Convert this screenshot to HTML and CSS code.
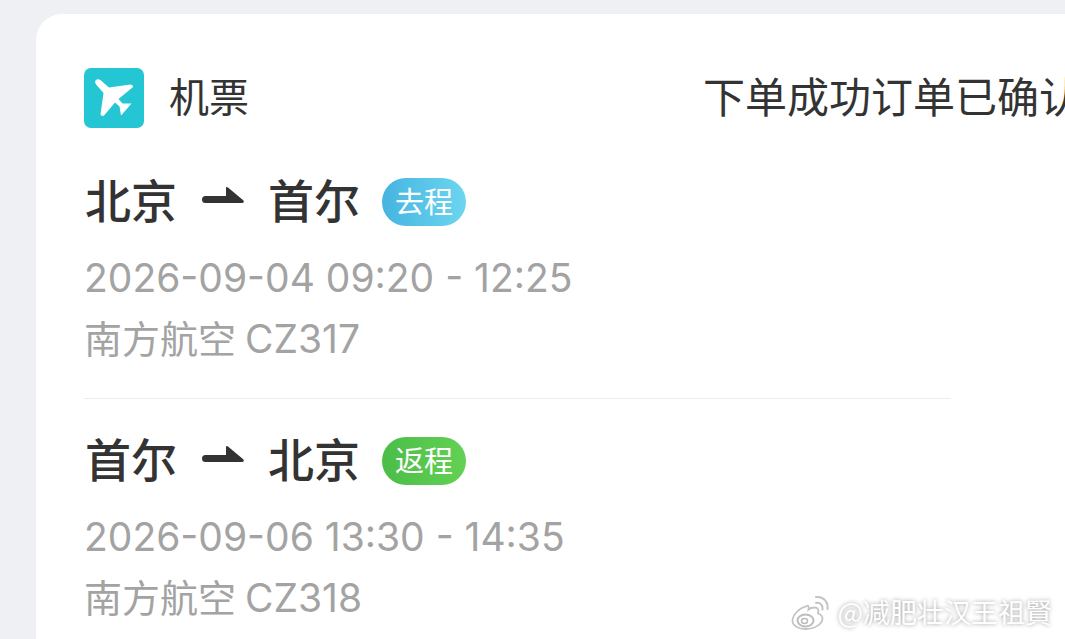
FILE: index.html
```html
<!DOCTYPE html>
<html lang="zh-CN">
<head>
<meta charset="utf-8">
<title>机票</title>
<link rel="stylesheet" href="styles.css">
</head>
<body>
<main class="card">
  <header class="head">
    <div class="brand">
      <svg class="logo" viewBox="0 0 60 60" aria-hidden="true">
        <rect width="60" height="60" rx="7" fill="#25c6d3"/>
        <path d="M12.500 17Q10 14 12 12 14 10.500 17 12.500L25 19.500 46.500 16.500Q50 17 48.500 19.500L34.500 31 38.500 35.500H47.500L37 47.500 35.500 38.500 31 34.500 20.500 47Q18 49 16.500 46.500L19.500 25Z" fill="#fff"/>
      </svg>
      <span class="brand-name">机票</span>
    </div>
    <span class="status">下单成功订单已确认</span>
  </header>

  <section class="leg">
    <h2 class="route">
      <span class="place">北京</span>
      <svg class="arrow" viewBox="0 0 42 20" aria-hidden="true"><path d="M3.500 11H24V3Q24 1.500 26 2.500L41.500 15.500Q42.500 18 40 18H3.500A3.500 3.500 0 0 1 3.500 11Z" fill="#333"/></svg>
      <span class="place">首尔</span>
      <span class="tag tag-out">去程</span>
    </h2>
    <p class="meta">2026-09-04 09:20 - 12:25</p>
    <p class="meta"><span class="carrier">南方航空</span><span class="flight">CZ317</span></p>
  </section>

  <hr class="rule">

  <section class="leg">
    <h2 class="route">
      <span class="place">首尔</span>
      <svg class="arrow" viewBox="0 0 42 20" aria-hidden="true"><path d="M3.500 11H24V3Q24 1.500 26 2.500L41.500 15.500Q42.500 18 40 18H3.500A3.500 3.500 0 0 1 3.500 11Z" fill="#333"/></svg>
      <span class="place">北京</span>
      <span class="tag tag-back">返程</span>
    </h2>
    <p class="meta">2026-09-06 13:30 - 14:35</p>
    <p class="meta"><span class="carrier">南方航空</span><span class="flight">CZ318</span></p>
  </section>
</main>

<div class="mark">
  <svg class="mark-icon" viewBox="0 0 38 36" aria-hidden="true">
    <path d="M16 12C8 14 1.500 21 1.500 27c0 4.500 6 8 13 8 10 0 17-5.500 17-10.500 0-3-3-4.500-4.500-5 1-3.500 0-6-3.500-6-2.500 0-5 1-6 2 .5-3-.5-4.500-1.500-3.500z" fill="#fff" stroke="#c4c4c4" stroke-width="1.800"/>
    <ellipse cx="14.500" cy="26.500" rx="8" ry="6" fill="none" stroke="#bdbdbd" stroke-width="2"/>
    <ellipse cx="13.500" cy="27" rx="3" ry="2.500" fill="none" stroke="#bdbdbd" stroke-width="1.500"/>
    <path d="M25 9c4-1 7 2 6.500 6.500M25 3c7.500-1 12.500 5 11.500 12" fill="none" stroke="#c4c4c4" stroke-width="2" stroke-linecap="round"/>
  </svg>
  <span>@减肥壮汉王祖賢</span>
</div>
</body>
</html>
```

FILE: styles.css
```css
html, body {
  margin: 0;
  height: 100%;
  overflow: hidden;
}

body {
  background: #eff0f4;
  padding: 14px 0 0 36px;
  box-sizing: border-box;
  font-family: "Inter", "Noto Sans CJK SC", sans-serif;
  color: #333;
}

.card {
  width: 1029px;
  height: 625px;
  overflow: hidden;
  box-sizing: border-box;
  background: #fff;
  border-radius: 26px 0 0 0;
  padding: 54px 0 0 48px;
}

.head {
  display: flex;
  align-items: center;
  height: 60px;
  margin-bottom: 50px;
}

.brand {
  display: flex;
  align-items: center;
  gap: 25px;
  width: 620px;
  flex: none;
}

.logo {
  width: 60px;
  height: 60px;
  display: block;
}

.brand-name {
  font-size: 40px;
  line-height: 54px;
  margin-bottom: 6px;
  font-family: "Noto Sans CJK SC", sans-serif;
}

.status {
  font-size: 42px;
  line-height: 54px;
  margin-bottom: 6px;
  margin-left: -1px;
  white-space: nowrap;
  font-family: "Noto Sans CJK SC", sans-serif;
}

.route {
  display: flex;
  align-items: center;
  margin: 0 0 21px;
  padding-left: 1px;
  height: 48px;
  font-size: 46px;
  font-weight: 500;
  font-family: "Noto Sans CJK SC", sans-serif;
}

.place {
  line-height: 40px;
  margin-bottom: 8px;
}

.arrow {
  width: 42px;
  height: 20px;
  margin: 0 24px 14px 25px;
}

.tag {
  display: flex;
  align-items: center;
  justify-content: center;
  box-sizing: border-box;
  width: 84px;
  height: 48px;
  margin-left: 22px;
  padding-bottom: 4px;
  border-radius: 24px;
  font-size: 29px;
  font-weight: 400;
  color: #fff;
}

.tag-out {
  background: linear-gradient(90deg, #45b4e0, #6cd6f0);
}

.tag-back {
  background: linear-gradient(90deg, #4bbd48, #63d154);
}

.meta {
  margin: 0;
  height: 61px;
  font-size: 39px;
  line-height: 61px;
  color: #a3a3a3;
  white-space: nowrap;
}

.carrier {
  font-size: 38px;
  line-height: 0;
  font-family: "Noto Sans CJK SC", sans-serif;
}

.flight {
  margin-left: 9px;
}

.rule {
  width: 867px;
  height: 1px;
  margin: 29px 0 38px;
  border: 0;
  background: #ededed;
}

.mark {
  position: absolute;
  right: 13px;
  bottom: 9px;
  display: flex;
  align-items: center;
  gap: 8px;
  font-family: "Noto Sans CJK SC", sans-serif;
  font-size: 27px;
  line-height: 36px;
  color: #fff;
  text-shadow: 0 0 4px #999;
}

.mark-icon {
  width: 38px;
  height: 36px;
}
```
